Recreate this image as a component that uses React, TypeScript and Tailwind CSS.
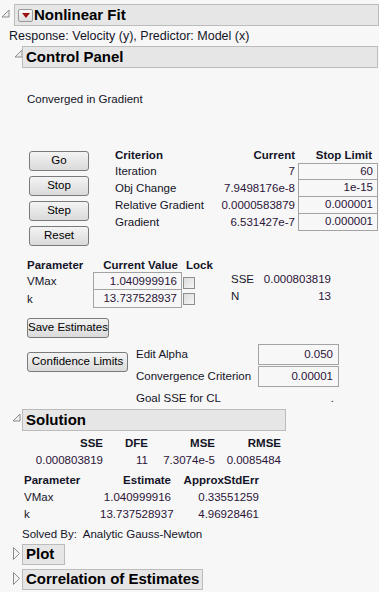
const font = { fontFamily: '"Liberation Sans", Arial, sans-serif' };

const barClass = 'h-full border border-[#bcbcbc] bg-[#e6e6e6] flex items-center pl-[3px] text-[15px] font-bold text-black';
const btnClass =
  'h-[20px] flex items-center justify-center whitespace-nowrap rounded-[3px] border border-[#7a7a7a] bg-gradient-to-b from-[#f4f4f4] to-[#dadada] text-[11.5px] text-black';
const boxClass = 'border border-[#a3a3a3] text-right pr-[4px] text-[#2b1438]';
const val = 'text-[#2b1438]';

function OpenTri() {
  return (
    <svg width="9" height="9" viewBox="0 0 9 9">
      <polygon points="8,1 8,8 1,8" fill="#efefef" stroke="#8c8c8c" strokeWidth="1" />
    </svg>
  );
}

function ClosedTri() {
  return (
    <svg width="7" height="13" viewBox="0 0 7 13">
      <polygon points="0.5,0.5 6.5,6.5 0.5,12.5" fill="#f4f4f4" stroke="#8c8c8c" strokeWidth="1" />
    </svg>
  );
}

function RedMenu() {
  return (
    <div className="w-[15px] h-[13px] rounded-[2px] border border-[#9a9a9a] bg-gradient-to-b from-[#fafafa] to-[#dedede] flex items-center justify-center">
      <svg width="8" height="5" viewBox="0 0 8 5">
        <polygon points="0,0 8,0 4,5" fill="#9e1111" />
      </svg>
    </div>
  );
}

function CheckBox() {
  return (
    <div className="w-[12px] h-[12px] border border-[#8e8e8e] bg-gradient-to-br from-[#dcdcdc] to-[#f6f6f6]" />
  );
}

export default function App() {
  const criteria = [
    ['Iteration', '7', '60'],
    ['Obj Change', '7.9498176e-8', '1e-15'],
    ['Relative Gradient', '0.0000583879', '0.000001'],
    ['Gradient', '6.531427e-7', '0.000001'],
  ];

  return (
    <div style={font} className="w-[379px] h-[592px] overflow-hidden bg-[#f7f7f7] text-[11.5px] text-[#141428] pt-[4px]">
      {/* Nonlinear Fit */}
      <div className="flex h-[22px]">
        <div className="w-[14px] pl-[1px] pt-[5px]">
          <OpenTri />
        </div>
        <div className="flex-1">
          <div className={barClass + ' pl-[1px] gap-[1px]'}>
            <RedMenu />
            <span>Nonlinear Fit</span>
          </div>
        </div>
      </div>

      <div className="mt-[3px] h-[14px] leading-[14px] pl-[9px] text-[12.5px]">Response: Velocity (y), Predictor: Model (x)</div>

      {/* Control Panel */}
      <div className="flex h-[22px] mt-[3px] pr-[1px]">
        <div className="w-[22px] pl-[14px] pt-[3px]">
          <OpenTri />
        </div>
        <div className="flex-1">
          <div className={barClass}>Control Panel</div>
        </div>
      </div>

      <div className="mt-[24px] h-[14px] leading-[14px] pl-[27px]">Converged in Gradient</div>

      <div className="mt-[42px] flex items-start">
        <div className="pl-[29px] pt-[3px] flex flex-col gap-[5px]">
          <div className={btnClass + ' w-[60px]'}>Go</div>
          <div className={btnClass + ' w-[60px]'}>Stop</div>
          <div className={btnClass + ' w-[60px]'}>Step</div>
          <div className={btnClass + ' w-[60px]'}>Reset</div>
        </div>
        <div className="ml-[26px] grid grid-cols-[100px_77px_80px] gap-x-[3px]">
          <div className="h-[15px] leading-[14px] font-bold">Criterion</div>
          <div className="h-[15px] leading-[14px] font-bold text-right">Current</div>
          <div className="h-[15px] leading-[14px] font-bold text-right pr-[6px]">Stop Limit</div>
          {criteria.map(([name, cur, lim], i) => (
            <div key={name} className="contents">
              <div className="h-[17px] leading-[17px]">{name}</div>
              <div className={'h-[17px] leading-[17px] text-right ' + val}>{cur}</div>
              <div className={boxClass + ' h-[17px] leading-[15px] ' + (i > 0 ? 'border-t-0' : '')}>{lim}</div>
            </div>
          ))}
        </div>
      </div>

      {/* Parameters */}
      <div className="mt-[12px] flex items-start">
        <div className="pl-[27px] grid grid-cols-[66px_89px_30px]">
          <div className="h-[14px] leading-[14px] font-bold">Parameter</div>
          <div className="h-[14px] leading-[14px] font-bold text-right pr-[4px]">Current Value</div>
          <div className="h-[14px] leading-[14px] font-bold pl-[4px]">Lock</div>
          <div className="h-[18px] leading-[18px]">VMax</div>
          <div className={boxClass + ' h-[18px] leading-[16px]'}>1.040999916</div>
          <div className="pl-[1px] pt-[5px]">
            <CheckBox />
          </div>
          <div className="h-[18px] leading-[18px]">k</div>
          <div className={boxClass + ' h-[18px] leading-[16px] border-t-0'}>13.737528937</div>
          <div className="pl-[1px] pt-[3px]">
            <CheckBox />
          </div>
        </div>
        <div className="ml-[19px] mt-[13px] grid grid-cols-[30px_70px]">
          <div className="h-[17px] leading-[17px]">SSE</div>
          <div className={'h-[17px] leading-[17px] text-right ' + val}>0.000803819</div>
          <div className="h-[17px] leading-[17px]">N</div>
          <div className={'h-[17px] leading-[17px] text-right ' + val}>13</div>
        </div>
      </div>

      <div className={btnClass + ' w-[82px] ml-[27px] mt-[10px]'}>Save Estimates</div>

      <div className="mt-[6px] flex items-start">
        <div className={btnClass + ' w-[101px] ml-[27px] mt-[8px]'}>Confidence Limits</div>
        <div className="ml-[8px] grid grid-cols-[122px_81px] gap-y-[1px]">
          <div className="h-[21px] leading-[21px]">Edit Alpha</div>
          <div className={boxClass + ' h-[21px] leading-[19px] pr-[5px]'}>0.050</div>
          <div className="h-[21px] leading-[21px]">Convergence Criterion</div>
          <div className={boxClass + ' h-[21px] leading-[19px] pr-[5px]'}>0.00001</div>
          <div className="h-[20px] leading-[20px]">Goal SSE for CL</div>
          <div className={'h-[20px] leading-[20px] text-right pr-[5px] ' + val}>.</div>
        </div>
      </div>

      {/* Solution */}
      <div className="flex h-[22px] mt-[1px]">
        <div className="w-[22px] pl-[12px] pt-[4px]">
          <OpenTri />
        </div>
        <div className="w-[264px]">
          <div className={barClass}>Solution</div>
        </div>
      </div>

      <div className="mt-[4px] pl-[20px] grid grid-cols-[83px_45px_67px_66px] text-right">
        <div className="h-[17px] leading-[17px] font-bold">SSE</div>
        <div className="h-[17px] leading-[17px] font-bold">DFE</div>
        <div className="h-[17px] leading-[17px] font-bold">MSE</div>
        <div className="h-[17px] leading-[17px] font-bold">RMSE</div>
        <div className={'h-[17px] leading-[17px] ' + val}>0.000803819</div>
        <div className={'h-[17px] leading-[17px] ' + val}>11</div>
        <div className={'h-[17px] leading-[17px] ' + val}>7.3074e-5</div>
        <div className={'h-[17px] leading-[17px] ' + val}>0.0085484</div>
      </div>

      <div className="mt-[3px] pl-[24px] grid grid-cols-[76px_71px_12px_76px]">
        <div className="h-[17px] leading-[17px] font-bold">Parameter</div>
        <div className="h-[17px] leading-[17px] font-bold text-right">Estimate</div>
        <div />
        <div className="h-[17px] leading-[17px] font-bold text-right">ApproxStdErr</div>
        <div className="h-[17px] leading-[17px]">VMax</div>
        <div className={'h-[17px] leading-[17px] text-right ' + val}>1.040999916</div>
        <div />
        <div className={'h-[17px] leading-[17px] text-right ' + val}>0.33551259</div>
        <div className="h-[17px] leading-[17px]">k</div>
        <div className={'h-[17px] leading-[17px] text-right ' + val}>13.737528937</div>
        <div />
        <div className={'h-[17px] leading-[17px] text-right ' + val}>4.96928461</div>
      </div>

      <div className="mt-[4px] h-[14px] leading-[14px] pl-[22px] whitespace-pre">Solved By:  Analytic Gauss-Newton</div>

      {/* Plot */}
      <div className="flex h-[21px] mt-[3px]">
        <div className="w-[22px] pl-[13px] pt-[3px]">
          <ClosedTri />
        </div>
        <div className="w-[43px]">
          <div className={barClass}>Plot</div>
        </div>
      </div>

      {/* Correlation of Estimates */}
      <div className="flex h-[21px] mt-[4px]">
        <div className="w-[22px] pl-[13px] pt-[3px]">
          <ClosedTri />
        </div>
        <div className="w-[181px]">
          <div className={barClass}>Correlation of Estimates</div>
        </div>
      </div>
    </div>
  );
}
